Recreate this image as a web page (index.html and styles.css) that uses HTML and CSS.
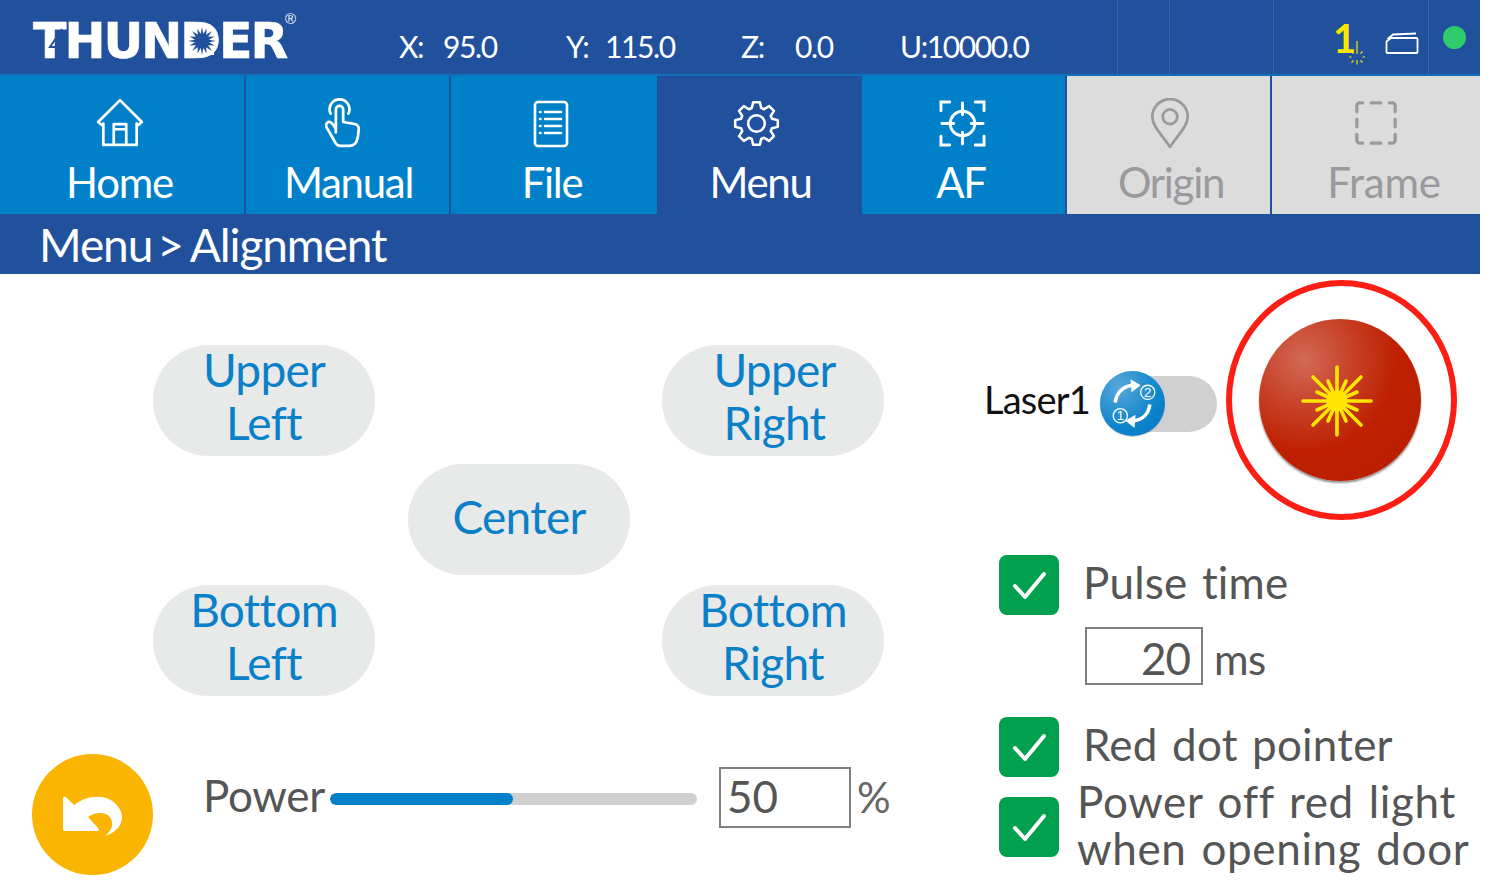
FILE: index.html
```html
<!DOCTYPE html>
<html lang="en">
<head>
<meta charset="utf-8">
<title>Alignment</title>
<link rel="stylesheet" href="styles.css">
</head>
<body>
<div class="screen">
  <header class="topbar">
    <div class="logo"><span class="logo-text">THUN<span class="logo-d">D<span class="logo-fill"></span><svg class="logo-star" viewBox="-15 -15 30 30"><path d="M0-14 1.300-7 4.600-12.500 4.200-6.200 9.900-9.900 6.200-4.200 12.500-4.600 7-1.300 14 0 7 1.300 12.500 4.600 6.200 4.200 9.900 9.900 4.200 6.200 4.600 12.500 1.300 7 0 14-1.300 7-4.600 12.500-4.200 6.200-9.900 9.900-6.200 4.200-12.500 4.600-7 1.300-14 0-7-1.300-12.500-4.600-6.200-4.200-9.900-9.900-4.200-6.200-4.600-12.500-1.300-7Z"/></svg></span>ER</span><svg class="logo-bolt" viewBox="0 0 34 36" fill="none"><path d="M24 7 12 25H20V36"/></svg><span class="logo-reg">®</span></div>
    <div class="coords">
      <span class="coord coord-x"><span class="axis">X:</span><span>95.0</span></span>
      <span class="coord coord-y"><span class="axis">Y:</span><span>115.0</span></span>
      <span class="coord coord-z"><span class="axis">Z:</span><span>0.0</span></span>
      <span class="coord coord-u">U:10000.0</span>
    </div>
    <div class="status">
      <div class="cell cell-a"></div>
      <div class="cell cell-b"></div>
      <div class="cell cell-c"></div>
      <div class="cell cell-laser"><span class="laser-num">1</span><svg class="laser-mini" viewBox="0 0 18 25"><g stroke="#f7e600" stroke-width="1.200" fill="none"><path d="M9 0V13M9 19V23.500M3.500 16H1M17 16H14.500M5.500 12.500 3.500 10.500M12.500 12.500 14.500 10.500M5.500 19.500 3.500 21.500M12.500 19.500 14.500 21.500"/></g></svg></div>
      <div class="cell cell-card"><svg class="card-icon" viewBox="0 0 34 22" fill="none" stroke="#fff" stroke-width="1.800" stroke-linejoin="round"><path d="M1.500 9.500 6 6H31.500a1 1 0 0 1 1 1V20a1 1 0 0 1-1 1H2.500a1 1 0 0 1-1-1Z"/><path d="M2.500 7 8 2.500 31 1.500"/></svg></div>
      <div class="cell cell-dot"><span class="dot"></span></div>
    </div>
  </header>

  <nav class="nav">
    <a class="tab tab-home">
      <svg class="tab-icon" viewBox="0 0 48 48" fill="none" stroke="#fff" stroke-width="2.600" stroke-linejoin="round"><path d="M3 23 24 2l21 21-3.500 3L40 24.500V45H8V24.500L6.500 26Z"/><path d="M18 45V25h12v20M18 30h12"/></svg>
      <span class="tab-label">Home</span>
    </a>
    <a class="tab tab-manual">
      <svg class="tab-icon" viewBox="0 0 48 48" fill="none" stroke="#fff" stroke-width="2.600" stroke-linejoin="round" stroke-linecap="round"><path d="M16 15a9.500 9.500 0 1 1 17 0"/><path d="M21 33V11a3.500 3.500 0 0 1 7 0v12l11 2c3 .6 4 2.500 4 5l-1 8c-.8 5-4 8-8 8h-8c-3 0-5-1.500-6-4L12 28c-1-3 .5-5 2.500-5 3 0 5 4 6.500 7"/></svg>
      <span class="tab-label">Manual</span>
    </a>
    <a class="tab tab-file">
      <svg class="tab-icon" viewBox="0 0 48 48" fill="none" stroke="#fff" stroke-width="2.600" stroke-linecap="round"><rect x="8" y="2" width="32" height="44" rx="3"/><path d="M18 12H34M18 19H34M18 26H34M18 33H34M13 12h.5M13 19h.5M13 26h.5M13 33h.5"/></svg>
      <span class="tab-label">File</span>
    </a>
    <a class="tab tab-menu is-active">
      <svg class="tab-icon" viewBox="0 0 48 48" fill="none" stroke="#fff" stroke-width="2.600" stroke-linejoin="round"><path d="M19.180 8.220 20.560 2.270H27.440L28.820 8.220 31.750 9.430 36.930 6.200 41.800 11.070 38.570 16.250 39.780 19.180 45.730 20.560V27.440L39.780 28.820 38.570 31.750 41.800 36.930 36.930 41.800 31.750 38.570 28.820 39.780 27.440 45.730H20.560L19.180 39.780 16.250 38.570 11.070 41.800 6.200 36.930 9.430 31.750 8.220 28.820 2.270 27.440V20.560L8.220 19.180 9.430 16.250 6.200 11.070 11.070 6.200 16.250 9.430Z"/><circle cx="24" cy="24" r="8.500"/></svg>
      <span class="tab-label">Menu</span>
    </a>
    <a class="tab tab-af">
      <svg class="tab-icon" viewBox="0 0 48 48" fill="none" stroke="#fff" stroke-width="3" stroke-linecap="round"><path d="M11 2H2V11M37 2H46V11M11 46H2V37M37 46H46V37"/><circle cx="24" cy="24" r="12.500"/><path d="M24 3V15M24 33V45M3 24H15M33 24H45"/></svg>
      <span class="tab-label">AF</span>
    </a>
    <a class="tab tab-origin is-disabled">
      <svg class="tab-icon" viewBox="0 0 48 48" fill="none" stroke="#9a9a9c" stroke-width="2.600" stroke-linejoin="round"><path d="M24 47C16 35 7 27 7 18a17 17 0 0 1 34 0c0 9-9 17-17 29Z"/><circle cx="24" cy="18" r="7"/></svg>
      <span class="tab-label">Origin</span>
    </a>
    <a class="tab tab-frame is-disabled">
      <svg class="tab-icon" viewBox="0 0 48 48" fill="none" stroke="#9a9a9c" stroke-width="3.400" stroke-linecap="round"><path d="M4 12V6a3 3 0 0 1 3-3h3M19 3H29M38 3h3a3 3 0 0 1 3 3v6M44 20V28M44 36v6a3 3 0 0 1-3 3h-3M29 45H19M10 45H7a3 3 0 0 1-3-3v-6M4 28V20"/></svg>
      <span class="tab-label">Frame</span>
    </a>
  </nav>

  <div class="crumb"><span>Menu</span><span class="crumb-sep">&gt;</span><span>Alignment</span></div>

  <main class="content">
    <section class="left">
      <div class="pad">
        <button class="pill pill-ul"><span class="pill-text">Upper<br>Left</span></button>
        <button class="pill pill-ur"><span class="pill-text">Upper<br>Right</span></button>
        <button class="pill pill-c">Center</button>
        <button class="pill pill-bl"><span class="pill-text">Bottom<br>Left</span></button>
        <button class="pill pill-br"><span class="pill-text">Bottom<br>Right</span></button>
      </div>
      <div class="power-row">
        <button class="back">
          <svg class="back-icon" viewBox="0 0 60 40"><path d="M1 2.500C1 .5 3 0 4.500 1.500L12 9C22 1 34-1 44 2c9 3 16 11 16 19 0 9-7 16-17 19 5-4 8-9 7-14-1-6-6-9-12-9-5 0-9 2-12 4l10 11c1.500 1.500 .5 3-1 3H3c-1 0-2-1-2-2Z" fill="#fff"/></svg>
        </button>
        <span class="power-label">Power</span>
        <div class="slider"><div class="slider-fill"></div></div>
        <div class="field field-power">50</div>
        <span class="percent">%</span>
      </div>
    </section>

    <section class="right">
      <div class="laser-row">
        <span class="laser-label">Laser1</span>
        <div class="toggle">
          <span class="knob">
            <svg viewBox="0 0 64 64" fill="none" stroke="#fff"><path d="M15 31C16 21 23 15 32 14" stroke-width="3.500"/><path d="M30 8l10 6-9 7Z" fill="#fff" stroke="none"/><path d="M49 33c-1 9-7 15-16 16" stroke-width="3.500"/><path d="M35 43l-10 6 9 7Z" fill="#fff" stroke="none"/><circle cx="47" cy="21" r="7" stroke-width="1.300"/><circle cx="20" cy="44" r="7" stroke-width="1.300"/><text class="knob-num" x="47" y="25.500">2</text><text class="knob-num" x="20" y="48.500">1</text></svg>
          </span>
        </div>
        <div class="fire-ring">
          <div class="fire">
            <svg class="burst" viewBox="-36 -36 72 72"><g stroke="#ffe600" stroke-width="3.600" stroke-linecap="round"><path d="M0-34V34M-34 0H34M-24-24 24 24M24-24-24 24"/><path d="M-9-20 9 20M9-20-9 20M-20-9 20 9M20-9-20 9" stroke-width="3.600"/></g><circle r="10.500" fill="#ffe600"/></svg>
          </div>
        </div>
      </div>

      <div class="options">
        <div class="option option-pulse">
          <span class="check"><svg viewBox="0 0 60 60"><path d="M16 31 26 42 45 19" class="tick"/></svg></span>
          <span class="option-text">Pulse time</span>
        </div>
        <div class="pulse-value"><div class="field field-ms">20</div><span class="ms">ms</span></div>
        <div class="option option-red">
          <span class="check"><svg viewBox="0 0 60 60"><path d="M16 31 26 42 45 19" class="tick"/></svg></span>
          <span class="option-text">Red dot pointer</span>
        </div>
        <div class="option option-door">
          <span class="check"><svg viewBox="0 0 60 60"><path d="M16 31 26 42 45 19" class="tick"/></svg></span>
          <span class="option-text option-two">Power off red light<br>when opening door</span>
        </div>
      </div>
    </section>
  </main>
</div>
</body>
</html>
```

FILE: styles.css
```css
* { box-sizing: border-box; }
html, body { margin: 0; padding: 0; background: #fff; }
body { font-family: "Lato", "Noto Sans", sans-serif; overflow: hidden; }
.screen { width: 1480px; height: 883px; overflow: hidden; }

/* top bar */
.topbar { height: 76px; background: #21509c; border-bottom: 2px solid #0f72b8; display: flex; color: #fff; position: relative; }
.logo { width: 399px; padding: 12px 0 0 33px; position: relative; }
.logo-text { font-family: "DejaVu Sans", sans-serif; font-weight: 700; font-size: 49px; line-height: 60px; letter-spacing: -2px; display: inline-block; -webkit-text-stroke: 0.6px #fff; }
.logo-d { position: relative; display: inline-block; }
.logo-fill { position: absolute; left: 8px; top: 17px; width: 26px; height: 26px; background: #fff; }
.logo-star { position: absolute; left: 7px; top: 14px; width: 30px; height: 30px; fill: #21509c; }
.logo-bolt { position: absolute; left: 38px; top: 22px; width: 34px; height: 36px; stroke: #21509c; stroke-width: 2; }
.logo-reg { position: absolute; left: 285px; top: 11px; font-size: 15px; line-height: 16px; font-family: "Liberation Sans", sans-serif; }
.coords { display: flex; padding-top: 28px; font-size: 30px; line-height: 36px; flex: none; width: 718px; letter-spacing: -1.400px; }
.coord { display: flex; }
.coord-x { width: 167px; }
.coord-x .axis { width: 44px; }
.coord-y { width: 175px; }
.coord-y .axis { width: 39px; }
.coord-z { width: 159px; }
.coord-z .axis { width: 54px; }
.status { display: flex; flex: 1; }
.cell { border-left: 1px solid #3a659f; height: 74px; position: relative; }
.cell-a { width: 52px; }
.cell-b { width: 104px; }
.cell-c { width: 52px; }
.cell-laser { width: 51px; border-left: 0; }
.cell-card { width: 52px; border-left: 0; }
.cell-dot { flex: 1; }
.laser-num { position: absolute; left: 8px; top: 16px; font-size: 40px; line-height: 44px; font-weight: 700; letter-spacing: -1px; color: #f7e600; }
.laser-mini { position: absolute; left: 23px; top: 41px; width: 18px; height: 25px; }
.card-icon { position: absolute; left: 9px; top: 32px; width: 34px; height: 22px; }
.dot { position: absolute; left: 14px; top: 26px; width: 23px; height: 23px; border-radius: 50%; background: #2ecc6b; }

/* nav */
.nav { display: flex; height: 138px; background: #21509c; }
.tab { display: flex; flex-direction: column; align-items: center; color: #fff; background: #0080c8; border-right: 2px solid #21509c; padding-top: 22px; }
.tab-icon { width: 50px; height: 50px; display: block; }
.tab-label { font-size: 42px; line-height: 50px; margin-top: 9px; letter-spacing: -1.300px; }
.tab-home { width: 246px; padding-right: 5px; }
.tab-manual { width: 205px; padding-left: 2px; }
.tab-manual .tab-icon { margin-right: 20px; }
.tab-file { width: 206px; border-right: 0; padding-right: 4px; }
.tab-file .tab-icon { margin-right: 2px; width: 48px; height: 48px; margin-top: 2px; }
.tab-menu { width: 205px; padding-left: 4px; }
.tab-menu .tab-icon { margin-right: 8px; width: 47px; height: 47px; margin-top: 2px; margin-bottom: 1px; }
.tab-af { width: 205px; padding-right: 5px; }
.tab-af .tab-icon { margin-left: 3px; width: 47px; height: 47px; margin-top: 2px; margin-bottom: 1px; }
.tab-origin { width: 205px; padding-left: 5px; }
.tab-origin .tab-icon { margin-right: 3px; }
.tab-frame { flex: 1; border-right: 0; padding-left: 16px; }
.tab-frame .tab-icon { margin-right: 16px; width: 46px; height: 46px; margin-top: 2px; margin-bottom: 2px; }
.tab-frame .tab-label { letter-spacing: -0.200px; }
.is-active { background: #21509c; border-right-color: #21509c; }
.is-disabled { background: #dcdcdc; color: #9a9a9c; }

/* breadcrumb */
.crumb { height: 60px; background: #21509c; color: #fff; font-size: 46px; line-height: 62px; padding-left: 39px; display: flex; letter-spacing: -1.100px; }
.crumb-sep { margin: 0 7px 0 5px; }

/* main */
.content { display: flex; height: 609px; }
.left { width: 985px; flex: none; position: relative; padding: 71px 0 0 153px; }
.pad { display: grid; grid-template-columns: 222px 222px 222px; column-gap: 33px; grid-template-rows: 119px 121px 111px; width: 732px; }
.pill { border: 0; background: #e8e9e9; border-radius: 56px; color: #0a80c8; font-family: inherit; font-size: 46px; line-height: 53px; padding: 0; height: 111px; letter-spacing: -0.700px; }
.pill-text { display: block; margin-top: -9px; }
.pill-ul { grid-column: 1; grid-row: 1; }
.pill-ur { grid-column: 3; grid-row: 1; margin-left: -1px; margin-right: 1px; padding-left: 3px; }
.pill-c { grid-column: 2; grid-row: 2; padding-bottom: 6px; }
.pill-bl { grid-column: 1; grid-row: 3; }
.pill-br { grid-column: 3; grid-row: 3; margin-left: -1px; margin-right: 1px; }

.power-row { display: flex; align-items: center; margin: 58px 0 0 -121px; height: 121px; }
.back { width: 121px; height: 121px; border: 0; border-radius: 50%; background: #f9b500; padding: 0; display: flex; align-items: center; justify-content: center; flex: none; }
.back-icon { width: 60px; height: 40px; margin-right: 1px; margin-top: 2px; }
.power-label { font-size: 44px; line-height: 50px; color: #555; margin: -40px 5px 0 50px; letter-spacing: -0.300px; }
.slider { width: 367px; height: 12px; border-radius: 6px; background: #d0d0d0; overflow: hidden; margin-top: -32px; flex: none; }
.slider-fill { width: 50%; height: 100%; background: #0080c8; border-radius: 6px; }
.field { border: 2px solid #808080; color: #555; font-size: 44px; line-height: 54px; }
.field-power { width: 132px; height: 61px; margin: -35px 0 0 22px; padding-left: 6px; flex: none; }
.percent { font-size: 42px; color: #666; margin: -35px 0 0 6px; }

/* right column */
.right { flex: 1; position: relative; }
.laser-row { display: flex; align-items: center; height: 250px; margin-top: 1px; }
.laser-label { font-size: 38px; line-height: 44px; color: #111; width: 115px; margin: -2px 0 0 -1px; letter-spacing: -0.800px; }
.toggle { width: 117px; height: 56px; border-radius: 28px; background: #d0d0d0; position: relative; flex: none; margin: 8px 0 0 1px; }
.knob { position: absolute; left: 0; top: -5px; width: 65px; height: 65px; border-radius: 50%; background: radial-gradient(circle at 30% 25%, #58a8da, #0c84cc 60%, #0774c2); display: block; box-shadow: 0 1px 1px rgba(0,0,0,.2); }
.knob svg { display: block; width: 65px; height: 65px; }
.knob-num { font-family: "Liberation Sans", sans-serif; font-size: 13px; text-anchor: middle; fill: #fff; stroke: none; }
.fire-ring { width: 231px; height: 240px; border: 6px solid #fb1e14; border-radius: 50%; margin-left: 9px; display: flex; align-items: center; justify-content: center; flex: none; }
.fire { width: 162px; height: 162px; border-radius: 50%; margin-right: 4px; background: radial-gradient(circle at 28% 25%, #d46a55 0, #c94a32 22%, #be2000 55%, #b81f04 100%); box-shadow: 0 2px 2px rgba(60,60,60,.55); display: flex; align-items: center; justify-content: center; }
.burst { width: 72px; height: 72px; margin-right: 5px; margin-top: 2px; }

.options { padding: 30px 0 0 14px; }
.option { display: flex; align-items: center; height: 60px; }
.check { width: 60px; height: 60px; border-radius: 8px; background: #00a04f; flex: none; display: block; }
.check svg { display: block; width: 60px; height: 60px; }
.tick { fill: none; stroke: #fff; stroke-width: 4; stroke-linecap: round; stroke-linejoin: round; }
.option-text { font-size: 44px; line-height: 48px; color: #555; margin: 0 0 7px 24px; letter-spacing: 0.200px; word-spacing: 3px; white-space: nowrap; }
.option-two { margin: 0 0 4px 18px; line-height: 47px; letter-spacing: 0.650px; word-spacing: 3px; }
.pulse-value { display: flex; align-items: center; margin: 12px 0 0 86px; height: 58px; }
.field-ms { width: 118px; height: 58px; text-align: right; padding-right: 11px; line-height: 58px; letter-spacing: -1px; }
.ms { font-size: 42px; color: #555; margin: 5px 0 0 11px; letter-spacing: -0.500px; }
.option-red { margin-top: 32px; }
.option-door { margin-top: 20px; }
```
